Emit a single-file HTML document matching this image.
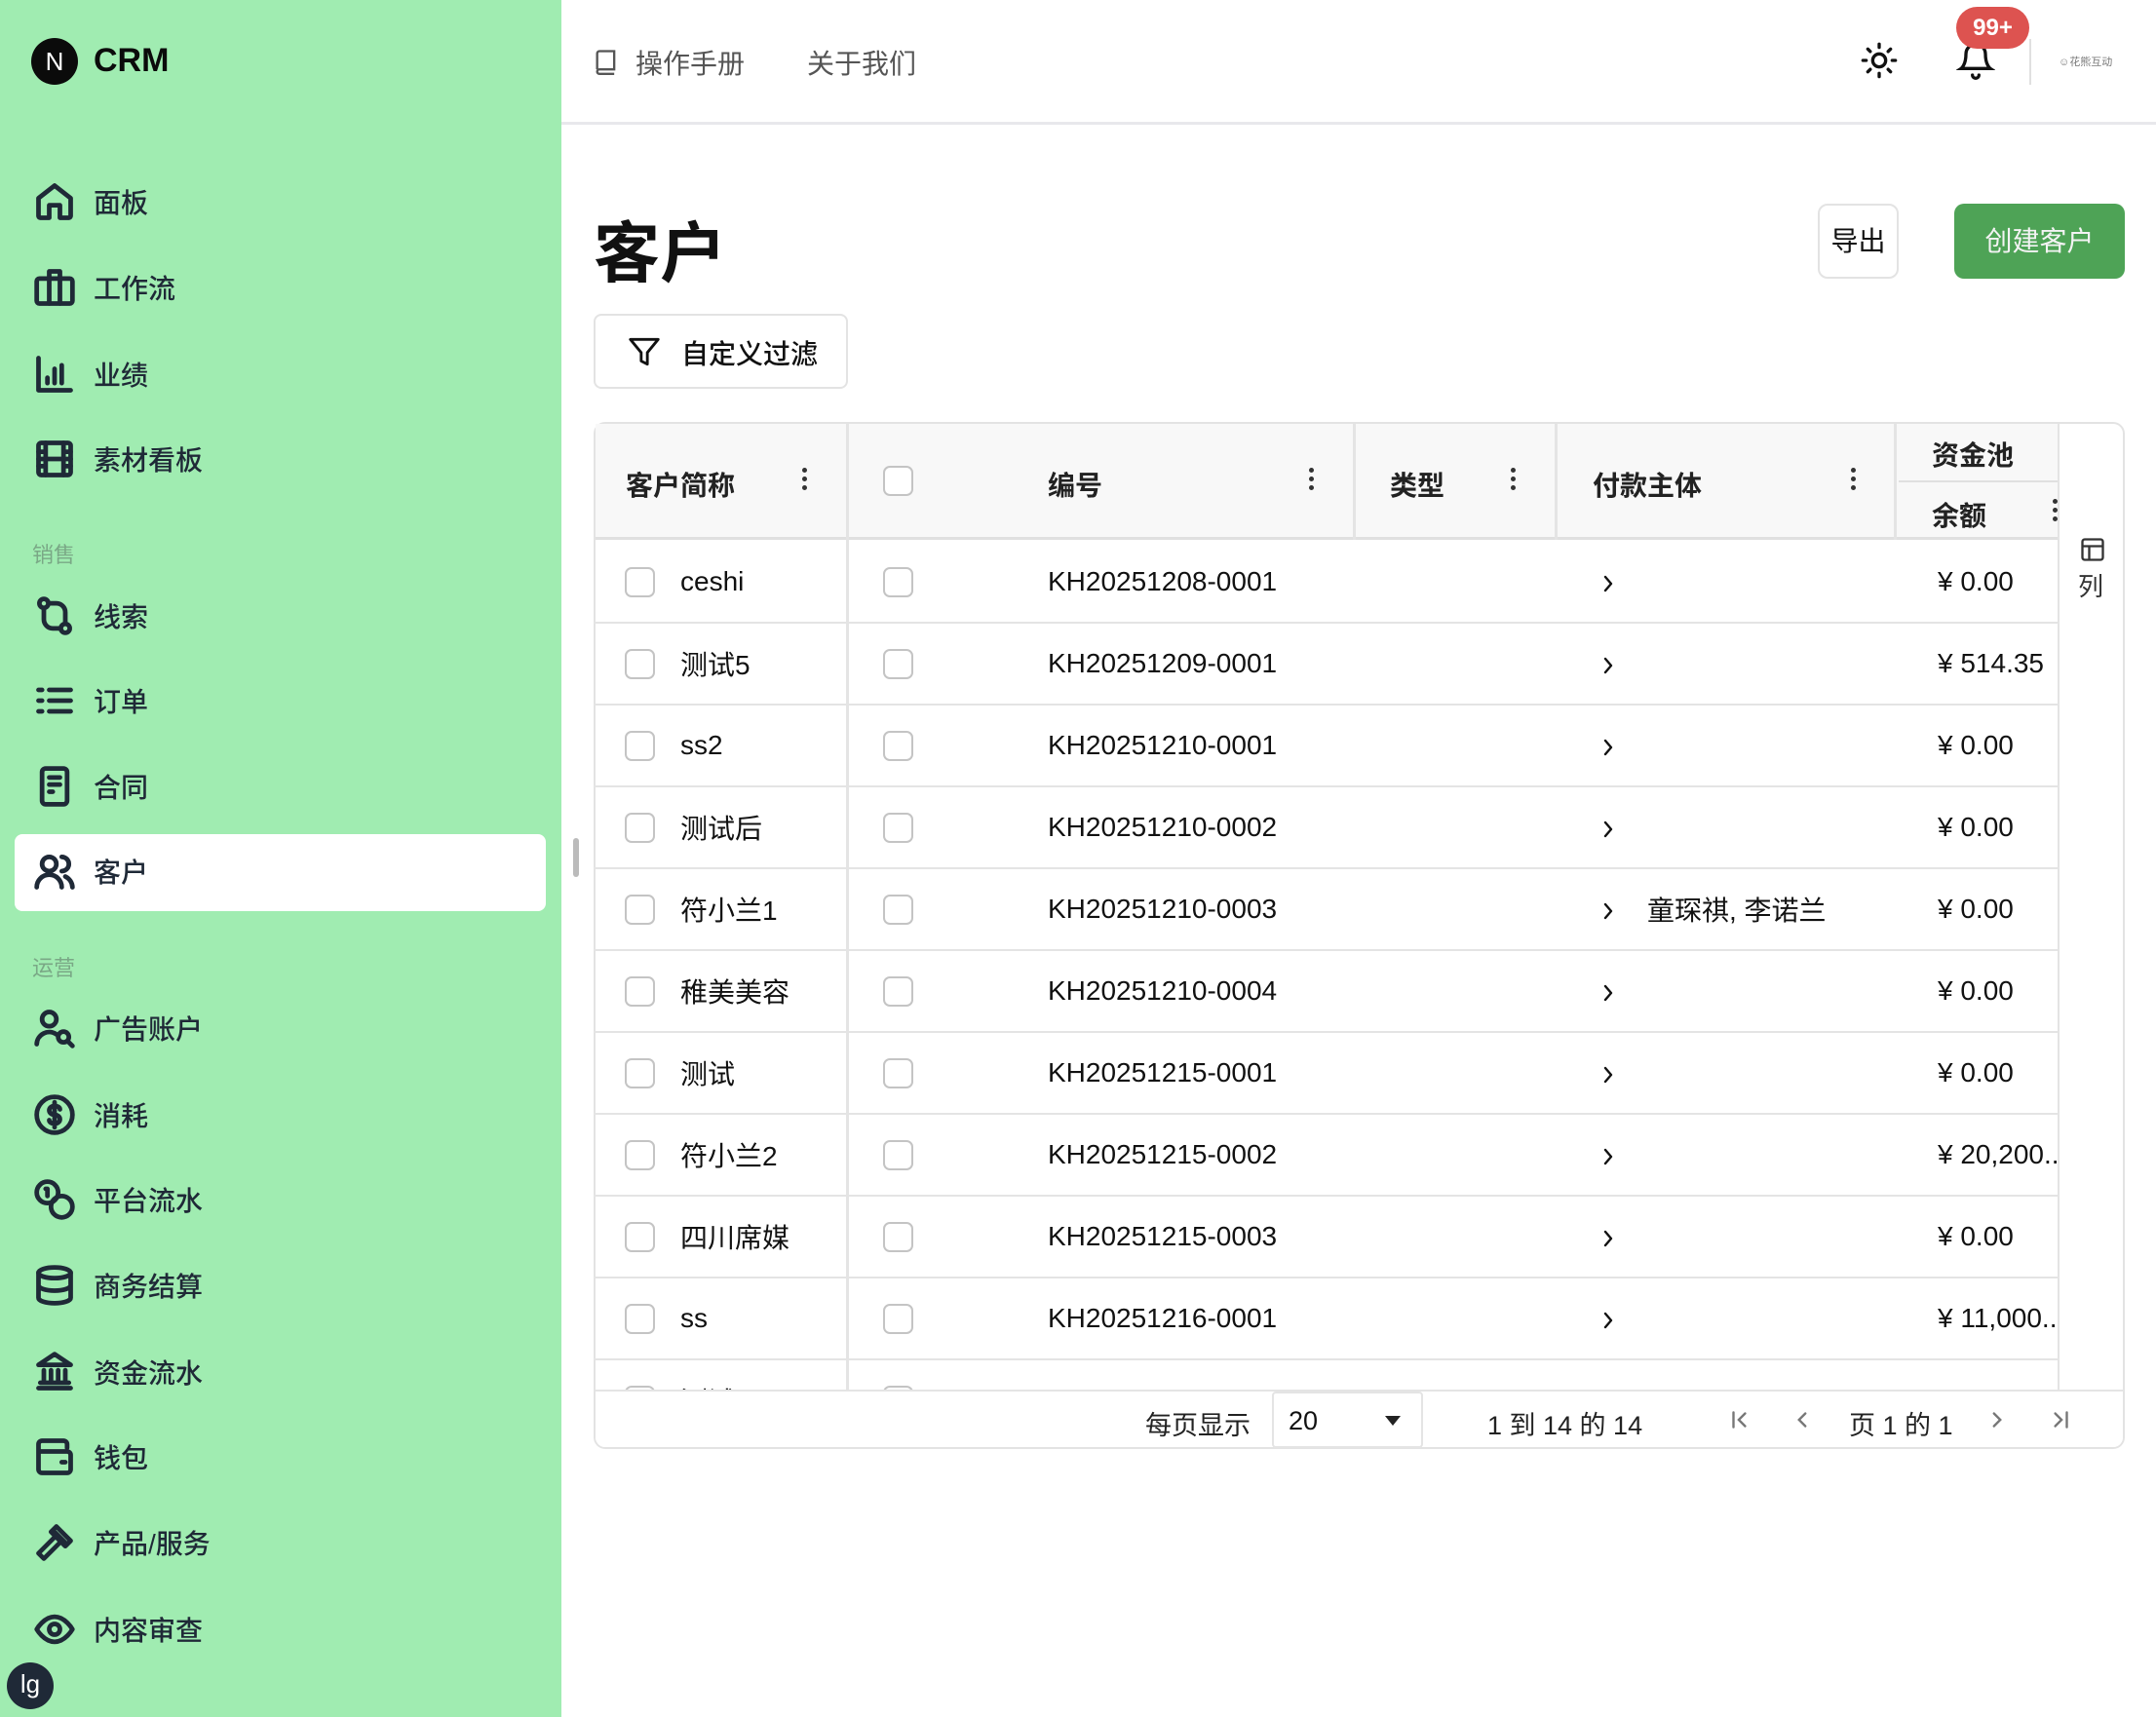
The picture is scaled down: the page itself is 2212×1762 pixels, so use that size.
<!DOCTYPE html>
<html><head><meta charset="utf-8"><style>
*{box-sizing:border-box;margin:0;padding:0}
html{width:2212px;height:1762px;overflow:hidden}
body{width:2212px;height:1762px;position:relative;overflow:hidden;background:#fff;font-family:"Liberation Sans","Noto Sans CJK SC",sans-serif;color:#111}
.a{position:absolute}
#side{left:0;top:0;width:576px;height:1762px;background:#a0ecb1}
.ni{position:absolute;left:0;width:576px;height:60px;display:flex;align-items:center}
.ni svg{position:absolute;left:34px;width:44px;height:44px;fill:none;stroke:#1f2937;stroke-width:2.6;stroke-linecap:round;stroke-linejoin:round}
.ni span{position:absolute;left:96px;font-size:28px;color:#1f2937;font-weight:500}
.sec{position:absolute;left:33px;font-size:22px;color:#7aa886}
.cb{position:absolute;width:31px;height:31px;border:2px solid #c4c4c4;border-radius:7px;background:#fff}
.row{position:absolute;left:0;width:1503px;height:84px;border-bottom:2px solid #e4e4e4;font-size:28px;color:#111}
.row .t{position:absolute;top:50%;transform:translateY(-50%);white-space:nowrap}
.row svg{position:absolute;left:1034px;top:32px}
.dots{position:absolute;width:6px}
.dots i{display:block;width:5px;height:5px;background:#333;border-radius:50%;margin:4px 0}
.th{position:absolute;font-size:28px;font-weight:600;color:#222}
.vl{position:absolute;width:3px;background:#e4e4e4}
</style></head><body>
<div id="side" class="a">
 <div class="a" style="left:32px;top:39px;width:48px;height:48px;border-radius:50%;background:#0b0b0b;color:#fff;font-size:26px;text-align:center;line-height:48px;font-weight:300">N</div>
 <div class="a" style="left:96px;top:43px;font-size:34px;font-weight:700;color:#0b0b0b">CRM</div>

 <div class="ni" style="top:177px"><svg viewBox="0 0 24 24"><path d="M3 10l9-7 9 7v10a1 1 0 0 1-1 1h-5v-7h-6v7H4a1 1 0 0 1-1-1z"/></svg><span>面板</span></div>
 <div class="ni" style="top:265px"><svg viewBox="0 0 24 24"><rect x="2" y="7" width="20" height="14" rx="1.5"/><path d="M9 7V3h6v4M9 7v14M15 7v14"/></svg><span>工作流</span></div>
 <div class="ni" style="top:354px"><svg viewBox="0 0 24 24"><path d="M3 3v18h18M8 17v-3M12 17V9M16 17V7"/></svg><span>业绩</span></div>
 <div class="ni" style="top:441px"><svg viewBox="0 0 24 24"><rect x="3" y="3" width="18" height="18" rx="1.5"/><path d="M7 3v18M17 3v18M3 8h4M3 12h18M3 16h4M17 8h4M17 16h4"/></svg><span>素材看板</span></div>

 <div class="sec" style="top:552px">销售</div>
 <div class="ni" style="top:602px"><svg viewBox="0 0 24 24"><circle cx="6" cy="5" r="2.5"/><circle cx="18" cy="19" r="2.5"/><path d="M6 8v6a5 5 0 0 0 5 5h4M18 16v-6a5 5 0 0 0-5-5H9"/></svg><span>线索</span></div>
 <div class="ni" style="top:689px"><svg viewBox="0 0 24 24"><path d="M9 6h12M9 12h12M9 18h12M3 6h2M3 12h2M3 18h2"/></svg><span>订单</span></div>
 <div class="ni" style="top:777px"><svg viewBox="0 0 24 24"><rect x="5" y="2" width="14" height="20" rx="2"/><path d="M9 7h6M9 11h6M9 15h2"/></svg><span>合同</span></div>
 <div class="a" style="left:15px;top:856px;width:545px;height:79px;background:#fff;border-radius:8px"></div>
 <div class="ni" style="top:864px"><svg viewBox="0 0 24 24"><circle cx="9" cy="8" r="4"/><path d="M2 21a7 7 0 0 1 14 0M16 4a4 4 0 0 1 0 8M22 21a7 7 0 0 0-4-6"/></svg><span>客户</span></div>

 <div class="sec" style="top:976px">运营</div>
 <div class="ni" style="top:1025px"><svg viewBox="0 0 24 24"><circle cx="9" cy="7" r="4"/><path d="M2 21a7 7 0 0 1 11-5.5"/><circle cx="17" cy="17" r="3"/><path d="M19.5 19.5L22 22"/></svg><span>广告账户</span></div>
 <div class="ni" style="top:1114px"><svg viewBox="0 0 24 24"><circle cx="12" cy="12" r="10"/><path d="M15 9a3 2 0 0 0-3-2 3 2.5 0 0 0 0 5 3 2.5 0 0 1 0 5 3 2 0 0 1-3-2M12 5v14"/></svg><span>消耗</span></div>
 <div class="ni" style="top:1201px"><svg viewBox="0 0 24 24"><circle cx="8" cy="8" r="6"/><circle cx="16" cy="16" r="6"/><path d="M7 6h1v4"/></svg><span>平台流水</span></div>
 <div class="ni" style="top:1289px"><svg viewBox="0 0 24 24"><ellipse cx="12" cy="5" rx="9" ry="3"/><path d="M3 5v14c0 1.7 4 3 9 3s9-1.3 9-3V5M3 12c0 1.7 4 3 9 3s9-1.3 9-3"/></svg><span>商务结算</span></div>
 <div class="ni" style="top:1378px"><svg viewBox="0 0 24 24"><path d="M3 21h18M4 18h16M6 18v-7M10 18v-7M14 18v-7M18 18v-7M12 2l9 6H3z"/></svg><span>资金流水</span></div>
 <div class="ni" style="top:1465px"><svg viewBox="0 0 24 24"><path d="M19 7V5a2 2 0 0 0-2-2H5a2 2 0 0 0-2 2v14a2 2 0 0 0 2 2h14a2 2 0 0 0 2-2v-8a2 2 0 0 0-2-2H3"/><path d="M16 15h2"/></svg><span>钱包</span></div>
 <div class="ni" style="top:1553px"><svg viewBox="0 0 24 24"><path d="M15 12l-9 9-3-3 9-9M12 6l6 6M13 3l8 8-3 3-8-8z"/></svg><span>产品/服务</span></div>
 <div class="ni" style="top:1642px"><svg viewBox="0 0 24 24"><path d="M2 12s4-7 10-7 10 7 10 7-4 7-10 7S2 12 2 12z"/><circle cx="12" cy="12" r="3"/></svg><span>内容审查</span></div>
 <div class="a" style="left:7px;top:1706px;width:48px;height:48px;border-radius:50%;background:#1f2937;color:#fff;font-size:26px;text-align:center;line-height:44px">lg</div>
</div>
<div class="a" style="left:588px;top:860px;width:6px;height:40px;background:#bbb;border-radius:3px"></div>

<!-- header -->
<div class="a" style="left:576px;top:125px;width:1636px;height:3px;background:#e8e8ec"></div>
<svg class="a" style="left:608px;top:48px" width="28" height="30" viewBox="0 0 24 24" fill="none" stroke="#555" stroke-width="2"><path d="M4 19V5a2 2 0 0 1 2-2h13v16H6a2 2 0 0 0 0 4h13"/></svg>
<div class="a" style="left:652px;top:44px;font-size:28px;color:#555">操作手册</div>
<div class="a" style="left:828px;top:44px;font-size:28px;color:#555">关于我们</div>
<svg class="a" style="left:1908px;top:42px" width="40" height="40" viewBox="0 0 24 24" fill="none" stroke="#111" stroke-width="2" stroke-linecap="round"><circle cx="12" cy="12" r="4"/><path d="M12 2v2M12 20v2M2 12h2M20 12h2M5 5l1.5 1.5M17.5 17.5L19 19M5 19l1.5-1.5M17.5 6.5L19 5"/></svg>
<svg class="a" style="left:2007px;top:40px" width="40" height="44" viewBox="0 0 24 24" fill="none" stroke="#111" stroke-width="2" stroke-linecap="round"><path d="M6 8a6 6 0 0 1 12 0c0 7 3 9 3 9H3s3-2 3-9M10 21a2 2 0 0 0 4 0"/></svg>
<div class="a" style="left:2007px;top:7px;width:75px;height:43px;border-radius:22px;background:#dd5350;color:#fff;font-size:24px;font-weight:600;text-align:center;line-height:43px">99+</div>
<div class="a" style="left:2082px;top:40px;width:2px;height:47px;background:#e0e0e0"></div>
<div class="a" style="left:2112px;top:55px;width:60px;height:16px;font-size:11px;color:#777;white-space:nowrap">☺花熊互动</div>

<div class="a" style="left:609px;top:205px;font-size:68px;font-weight:700;color:#111">客户</div>
<div class="a" style="left:1865px;top:209px;width:83px;height:77px;border:2px solid #e3e3e3;border-radius:10px;font-size:28px;text-align:center;line-height:73px">导出</div>
<div class="a" style="left:2005px;top:209px;width:175px;height:77px;background:#4ea356;border-radius:10px;font-size:28px;color:#f3f3f3;text-align:center;line-height:77px">创建客户</div>
<div class="a" style="left:609px;top:322px;width:261px;height:77px;border:2px solid #e3e3e3;border-radius:8px"></div>
<svg class="a" style="left:642px;top:342px" width="38" height="38" viewBox="0 0 24 24" fill="none" stroke="#111" stroke-width="1.8" stroke-linejoin="round"><path d="M3 4h18l-7 8.5V20l-4-2v-5.5z"/></svg>
<div class="a" style="left:699px;top:342px;font-size:28px;font-weight:500">自定义过滤</div>

<!-- table -->
<div class="a" style="left:609px;top:433px;width:1571px;height:1054px;border:2px solid #e3e3e3;border-radius:12px;overflow:hidden"></div>
<div class="a" style="left:611px;top:435px;width:1501px;height:119px;background:#f8f8f8;border-bottom:3px solid #e0e0e0"></div>
<div id="rows" class="a" style="left:609px;top:556px;width:1503px;height:870px;overflow:hidden"></div>
<div class="vl" style="left:868px;top:435px;height:991px"></div>
<div class="vl" style="left:1388px;top:435px;height:119px"></div>
<div class="vl" style="left:1595px;top:435px;height:119px"></div>
<div class="vl" style="left:1943px;top:435px;height:119px"></div>
<div class="a" style="left:1948px;top:493px;width:164px;height:2px;background:#e0e0e0"></div>
<div class="vl" style="left:2111px;top:435px;height:991px;width:2px"></div>
<div class="th" style="left:642px;top:477px">客户简称</div>
<div class="dots" style="left:823px;top:476px"><i></i><i></i><i></i></div>
<div class="cb" style="left:906px;top:478px"></div>
<div class="th" style="left:1075px;top:477px">编号</div>
<div class="dots" style="left:1343px;top:476px"><i></i><i></i><i></i></div>
<div class="th" style="left:1426px;top:477px">类型</div>
<div class="dots" style="left:1550px;top:476px"><i></i><i></i><i></i></div>
<div class="th" style="left:1634px;top:477px">付款主体</div>
<div class="dots" style="left:1899px;top:476px"><i></i><i></i><i></i></div>
<div class="th" style="left:1982px;top:446px">资金池</div>
<div class="th" style="left:1982px;top:508px">余额</div>
<div class="dots" style="left:2106px;top:508px"><i></i><i></i><i></i></div>
<svg class="a" style="left:2133px;top:550px" width="28" height="28" viewBox="0 0 24 24" fill="none" stroke="#333" stroke-width="2"><rect x="3" y="3" width="18" height="18" rx="2"/><path d="M3 9h18M9 9v12"/></svg>
<div class="a" style="left:2132px;top:582px;font-size:26px;color:#333">列</div>

<script>
var d=[["ceshi","KH20251208-0001","","¥ 0.00"],["测试5","KH20251209-0001","","¥ 514.35"],["ss2","KH20251210-0001","","¥ 0.00"],["测试后","KH20251210-0002","","¥ 0.00"],["符小兰1","KH20251210-0003","童琛祺, 李诺兰","¥ 0.00"],["稚美美容","KH20251210-0004","","¥ 0.00"],["测试","KH20251215-0001","","¥ 0.00"],["符小兰2","KH20251215-0002","","¥ 20,200.."],["四川席媒","KH20251215-0003","","¥ 0.00"],["ss","KH20251216-0001","","¥ 11,000..."],["测试","KH20251216-0002","","¥ 0.00"]];
var h="";d.forEach(function(r,i){var top=84*i;h+='<div class="row" style="top:'+top+'px"><div class="cb" style="left:32px;top:26px"></div><div class="t" style="left:89px">'+r[0]+'</div><div class="cb" style="left:297px;top:26px"></div><div class="t" style="left:466px">'+r[1]+'</div><svg width="14" height="22" viewBox="0 0 14 22" fill="none" stroke="#111" stroke-width="2.4" stroke-linecap="round" stroke-linejoin="round"><path d="M4 4l6 7-6 7"/></svg><div class="t" style="left:1081px">'+r[2]+'</div><div class="t" style="left:1379px;width:124px;overflow:hidden">'+r[3]+'</div></div>';});
document.getElementById("rows").innerHTML=h;
</script>
<div class="a" style="left:611px;top:1426px;width:1567px;height:59px;background:#fff;border-top:2px solid #e4e4e4;border-radius:0 0 10px 10px"></div>
<div class="a" style="left:1175px;top:1441px;font-size:27px;color:#222">每页显示</div>
<div class="a" style="left:1305px;top:1428px;width:155px;height:58px;border:2px solid #e4e4e4;border-radius:4px"></div>
<div class="a" style="left:1322px;top:1443px;font-size:27px">20</div>
<div class="a" style="left:1421px;top:1453px;width:0;height:0;border-left:8px solid transparent;border-right:8px solid transparent;border-top:10px solid #222"></div>
<div class="a" style="left:1526px;top:1441px;font-size:27px;color:#222">1 到 14 的 14</div>
<svg class="a" style="left:1772px;top:1444px" width="26" height="26" viewBox="0 0 24 24" fill="none" stroke="#777" stroke-width="2.2" stroke-linecap="round"><path d="M6 5v14M17 6l-6 6 6 6"/></svg>
<svg class="a" style="left:1836px;top:1444px" width="26" height="26" viewBox="0 0 24 24" fill="none" stroke="#777" stroke-width="2.2" stroke-linecap="round"><path d="M15 6l-6 6 6 6"/></svg>
<div class="a" style="left:1897px;top:1441px;font-size:27px;color:#222">页 1 的 1</div>
<svg class="a" style="left:2036px;top:1444px" width="26" height="26" viewBox="0 0 24 24" fill="none" stroke="#777" stroke-width="2.2" stroke-linecap="round"><path d="M9 6l6 6-6 6"/></svg>
<svg class="a" style="left:2101px;top:1444px" width="26" height="26" viewBox="0 0 24 24" fill="none" stroke="#777" stroke-width="2.2" stroke-linecap="round"><path d="M18 5v14M7 6l6 6-6 6"/></svg>
</body></html>
